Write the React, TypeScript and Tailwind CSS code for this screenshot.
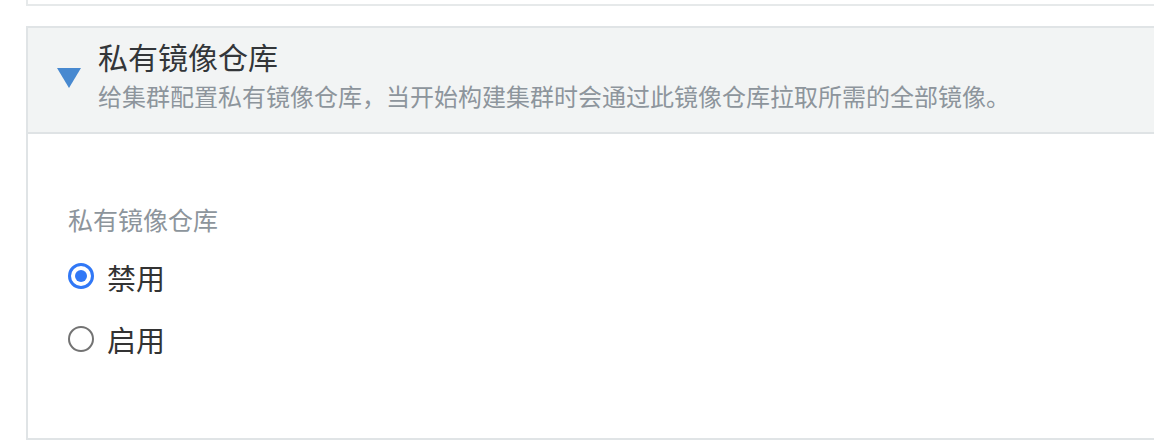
export default function App() {
  const font = { fontFamily: '"Noto Sans CJK SC", "Noto Sans", sans-serif' };
  return (
    <div className="w-[1154px] h-[444px] overflow-hidden bg-white" style={font}>
      <div className="ml-[26px] w-[1200px] h-[6px] border-l-2 border-b-2 border-[#e6e9ea]" />
      <div className="ml-[26px] mt-[20px] w-[1200px] border-l-2 border-t-2 border-b-2 border-[#e0e4e6]">
        <div className="flex items-center bg-[#f2f4f4] border-b-2 border-[#dfe3e5] pt-[9px] pb-[20px] h-[106px]">
          <div className="w-[70px] flex justify-center pl-[12px] pt-[6px]">
            <svg width="24" height="20" viewBox="0 0 24 20">
              <polygon points="0,0 24,0 12,20" fill="#4889d0" />
            </svg>
          </div>
          <div className="flex flex-col">
            <div className="text-[30px] leading-[36px] text-[#333639]">私有镜像仓库</div>
            <div className="mt-[6px] text-[24px] leading-[32px] text-[#8d959c]">
              给集群配置私有镜像仓库，当开始构建集群时会通过此镜像仓库拉取所需的全部镜像。
            </div>
          </div>
        </div>
        <div className="h-[304px] pl-[40px] pt-[69px]">
          <div className="text-[25px] leading-[32px] text-[#8d959c]">私有镜像仓库</div>
          <div className="mt-[25px] flex flex-col gap-[31px]">
            <label className="flex items-center h-[32px]">
              <span className="w-[26px] h-[26px] rounded-full border-[3px] border-[#3178f6] flex items-center justify-center">
                <span className="w-[12px] h-[12px] rounded-full bg-[#3178f6]" />
              </span>
              <span className="ml-[13px] mt-[2px] text-[29px] leading-[32px] text-[#333333]">禁用</span>
            </label>
            <label className="flex items-center h-[32px]">
              <span className="w-[26px] h-[26px] rounded-full border-2 border-[#737373]" />
              <span className="ml-[13px] text-[29px] leading-[32px] text-[#333333]">启用</span>
            </label>
          </div>
        </div>
      </div>
    </div>
  );
}
